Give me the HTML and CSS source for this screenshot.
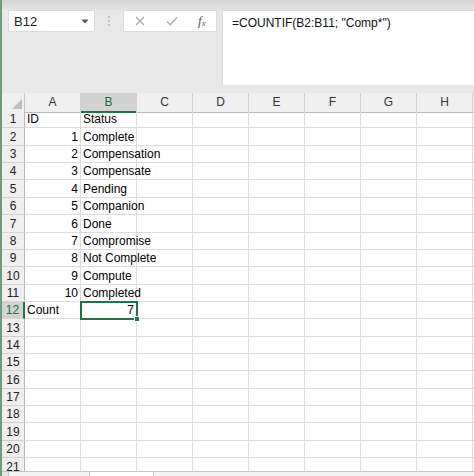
FILE: index.html
```html
<!DOCTYPE html>
<html>
<head>
<meta charset="utf-8">
<link rel="stylesheet" href="styles.css">
</head>
<body>
<div class="app">
  <div class="topstrip"></div>
  <div class="toolbar">
    <div class="namebox">
      <span class="name">B12</span>
      <svg class="dd" width="8" height="5" viewBox="0 0 8 5"><path d="M0.5 0.5 L7.5 0.5 L4 4.5 Z" fill="#555"/></svg>
    </div>
    <div class="sep"><span></span><span></span><span></span></div>
    <div class="fbtns">
      <svg class="ico" width="10" height="10" viewBox="0 0 10 10"><path d="M1 1 L9 9 M9 1 L1 9" stroke="#a8a8a8" stroke-width="1.3" fill="none"/></svg>
      <svg class="ico" width="12" height="10" viewBox="0 0 12 10"><path d="M1 5.5 L4.3 8.8 L11 1.2" stroke="#a8a8a8" stroke-width="1.3" fill="none"/></svg>
      <span class="fx">f<sub>x</sub></span>
    </div>
    <div class="finput">=COUNTIF(B2:B11; "Comp*")</div>
  </div>
  <div class="sheet">
    <div class="row hdr">
      <div class="corner"><svg width="10" height="10" viewBox="0 0 10 10"><path d="M10 0 L10 10 L0 10 Z" fill="#bdbdbd"/></svg></div>
      <div class="ch">A</div><div class="ch sel">B</div><div class="ch">C</div><div class="ch">D</div><div class="ch">E</div><div class="ch">F</div><div class="ch">G</div><div class="ch">H</div><div class="ch"></div>
    </div>
    <div class="row"><div class="rh">1</div><div class="c">ID</div><div class="c">Status</div><div class="c"></div><div class="c"></div><div class="c"></div><div class="c"></div><div class="c"></div><div class="c"></div><div class="c"></div></div>
    <div class="row"><div class="rh">2</div><div class="c n">1</div><div class="c">Complete</div><div class="c"></div><div class="c"></div><div class="c"></div><div class="c"></div><div class="c"></div><div class="c"></div><div class="c"></div></div>
    <div class="row"><div class="rh">3</div><div class="c n">2</div><div class="c">Compensation</div><div class="c"></div><div class="c"></div><div class="c"></div><div class="c"></div><div class="c"></div><div class="c"></div><div class="c"></div></div>
    <div class="row"><div class="rh">4</div><div class="c n">3</div><div class="c">Compensate</div><div class="c"></div><div class="c"></div><div class="c"></div><div class="c"></div><div class="c"></div><div class="c"></div><div class="c"></div></div>
    <div class="row"><div class="rh">5</div><div class="c n">4</div><div class="c">Pending</div><div class="c"></div><div class="c"></div><div class="c"></div><div class="c"></div><div class="c"></div><div class="c"></div><div class="c"></div></div>
    <div class="row"><div class="rh">6</div><div class="c n">5</div><div class="c">Companion</div><div class="c"></div><div class="c"></div><div class="c"></div><div class="c"></div><div class="c"></div><div class="c"></div><div class="c"></div></div>
    <div class="row"><div class="rh">7</div><div class="c n">6</div><div class="c">Done</div><div class="c"></div><div class="c"></div><div class="c"></div><div class="c"></div><div class="c"></div><div class="c"></div><div class="c"></div></div>
    <div class="row"><div class="rh">8</div><div class="c n">7</div><div class="c">Compromise</div><div class="c"></div><div class="c"></div><div class="c"></div><div class="c"></div><div class="c"></div><div class="c"></div><div class="c"></div></div>
    <div class="row"><div class="rh">9</div><div class="c n">8</div><div class="c">Not Complete</div><div class="c"></div><div class="c"></div><div class="c"></div><div class="c"></div><div class="c"></div><div class="c"></div><div class="c"></div></div>
    <div class="row"><div class="rh">10</div><div class="c n">9</div><div class="c">Compute</div><div class="c"></div><div class="c"></div><div class="c"></div><div class="c"></div><div class="c"></div><div class="c"></div><div class="c"></div></div>
    <div class="row"><div class="rh">11</div><div class="c n">10</div><div class="c">Completed</div><div class="c"></div><div class="c"></div><div class="c"></div><div class="c"></div><div class="c"></div><div class="c"></div><div class="c"></div></div>
    <div class="row"><div class="rh selr">12</div><div class="c">Count</div><div class="c n active">7<span class="handle"></span></div><div class="c"></div><div class="c"></div><div class="c"></div><div class="c"></div><div class="c"></div><div class="c"></div><div class="c"></div></div>
    <div class="row"><div class="rh">13</div><div class="c"></div><div class="c"></div><div class="c"></div><div class="c"></div><div class="c"></div><div class="c"></div><div class="c"></div><div class="c"></div><div class="c"></div></div>
    <div class="row"><div class="rh">14</div><div class="c"></div><div class="c"></div><div class="c"></div><div class="c"></div><div class="c"></div><div class="c"></div><div class="c"></div><div class="c"></div><div class="c"></div></div>
    <div class="row"><div class="rh">15</div><div class="c"></div><div class="c"></div><div class="c"></div><div class="c"></div><div class="c"></div><div class="c"></div><div class="c"></div><div class="c"></div><div class="c"></div></div>
    <div class="row"><div class="rh">16</div><div class="c"></div><div class="c"></div><div class="c"></div><div class="c"></div><div class="c"></div><div class="c"></div><div class="c"></div><div class="c"></div><div class="c"></div></div>
    <div class="row"><div class="rh">17</div><div class="c"></div><div class="c"></div><div class="c"></div><div class="c"></div><div class="c"></div><div class="c"></div><div class="c"></div><div class="c"></div><div class="c"></div></div>
    <div class="row"><div class="rh">18</div><div class="c"></div><div class="c"></div><div class="c"></div><div class="c"></div><div class="c"></div><div class="c"></div><div class="c"></div><div class="c"></div><div class="c"></div></div>
    <div class="row"><div class="rh">19</div><div class="c"></div><div class="c"></div><div class="c"></div><div class="c"></div><div class="c"></div><div class="c"></div><div class="c"></div><div class="c"></div><div class="c"></div></div>
    <div class="row"><div class="rh">20</div><div class="c"></div><div class="c"></div><div class="c"></div><div class="c"></div><div class="c"></div><div class="c"></div><div class="c"></div><div class="c"></div><div class="c"></div></div>
    <div class="row"><div class="rh">21</div><div class="c"></div><div class="c"></div><div class="c"></div><div class="c"></div><div class="c"></div><div class="c"></div><div class="c"></div><div class="c"></div><div class="c"></div></div>
  </div>
  <div class="tabbar">
    <div class="tab1"></div>
    <div class="tab2"></div>
    <div class="tab3"></div>
  </div>
</div>
</body>
</html>
```
FILE: styles.css
```css
* { box-sizing: border-box; }
html, body { margin: 0; padding: 0; }
body {
  width: 474px;
  height: 476px;
  overflow: hidden;
  background: #e8e8e8;
  font-family: "Liberation Sans", Arial, sans-serif;
  color: #000;
}
.app {
  display: flex;
  flex-direction: column;
  height: 476px;
  border-left: 2px solid #6f9a7c;
}
.topstrip {
  height: 10px;
  background: linear-gradient(#d4d4d4, #e3e3e3);
}
.toolbar {
  display: flex;
  align-items: flex-start;
  height: 75px;
  padding-left: 6px;
  margin-bottom: 8px;
  background: #e8e8e8;
}
.namebox {
  width: 87px;
  height: 22px;
  background: #fff;
  border: 1px solid #dcdcdc;
  display: flex;
  align-items: center;
  justify-content: space-between;
  padding: 0 5px 0 5px;
}
.name { font-size: 13px; color: #222; }
.dd { margin-top: 1px; }
.sep {
  width: 28px;
  height: 22px;
  display: flex;
  flex-direction: column;
  align-items: center;
  justify-content: center;
  gap: 2px;
}
.sep span {
  width: 2px;
  height: 2px;
  background: #b4b4b4;
  border-radius: 1px;
}
.fbtns {
  width: 94px;
  height: 22px;
  background: #fff;
  border: 1px solid #dcdcdc;
  display: flex;
  align-items: center;
  padding-left: 11px;
}
.fbtns .ico:nth-child(1) { margin-right: 21px; }
.fbtns .ico:nth-child(2) { margin-right: 20px; }
.fx {
  font-family: "Liberation Serif", "Times New Roman", serif;
  font-style: italic;
  font-size: 13px;
  color: #555;
  line-height: 1;
}
.fx sub { font-size: 9px; vertical-align: -1px; }
.finput {
  flex: 1;
  height: 75px;
  margin-left: 5px;
  background: #fff;
  border-left: 1px solid #dcdcdc;
  border-top: 1px solid #dcdcdc;
  padding: 5px 0 0 9px;
  font-size: 12px;
  color: #111;
  white-space: nowrap;
}
.sheet {
  height: 378px;
  overflow: hidden;
  background: #fff;
}
.row {
  display: grid;
  grid-template-columns: 23px repeat(9, 56px);
  height: 17.36px;
}
.row.hdr { height: 18px; }
.corner {
  background: #efefef;
  border-right: 1px solid #c6c6c6;
  border-bottom: 1px solid #b8b8b8;
  display: flex;
  align-items: flex-end;
  justify-content: flex-end;
  padding: 0 2px 3px 0;
}
.ch {
  background: #efefef;
  border-right: 1px solid #d2d2d2;
  border-bottom: 1px solid #b8b8b8;
  font-size: 12px;
  color: #333;
  text-align: center;
  line-height: 18px;
}
.ch.sel {
  background: #d3d3d3;
  color: #1d6a3e;
  border-bottom: 2px solid #217346;
}
.rh {
  background: #efefef;
  border-right: 1px solid #b8b8b8;
  border-bottom: 1px solid #d2d2d2;
  font-size: 12px;
  color: #222;
  display: flex;
  align-items: flex-end;
  justify-content: center;
  padding-bottom: 1px;
  line-height: 14px;
}
.rh.selr {
  background: #d3d3d3;
  color: #1d6a3e;
  border-right: 2px solid #217346;
}
.c {
  position: relative;
  border-right: 1px solid #dcdcdc;
  border-bottom: 1px solid #dcdcdc;
  font-size: 12px;
  line-height: 14px;
  padding: 0 2px 1px 2px;
  display: flex;
  align-items: flex-end;
  white-space: nowrap;
  overflow: visible;
}
.c.n { justify-content: flex-end; }
.c.active {
  outline: 2px solid #217346;
  outline-offset: -1px;
  z-index: 2;
}
.handle {
  position: absolute;
  right: -4px;
  bottom: -4px;
  width: 6px;
  height: 6px;
  background: #217346;
  border: 1px solid #fff;
}
.tabbar {
  flex: 1;
  display: flex;
  background: #e6e6e6;
  border-top: 1px solid #c2c2c2;
}
.tab1 {
  width: 82px;
  margin-left: 6px;
  background: #f4f4f4;
  border-left: 1px solid #c6c6c6;
  border-right: 1px solid #c6c6c6;
}
.tab2 {
  width: 63px;
  background: #fff;
}
.tab3 {
  flex: 1;
  background: #f4f4f4;
  border-left: 1px solid #c6c6c6;
}
```
